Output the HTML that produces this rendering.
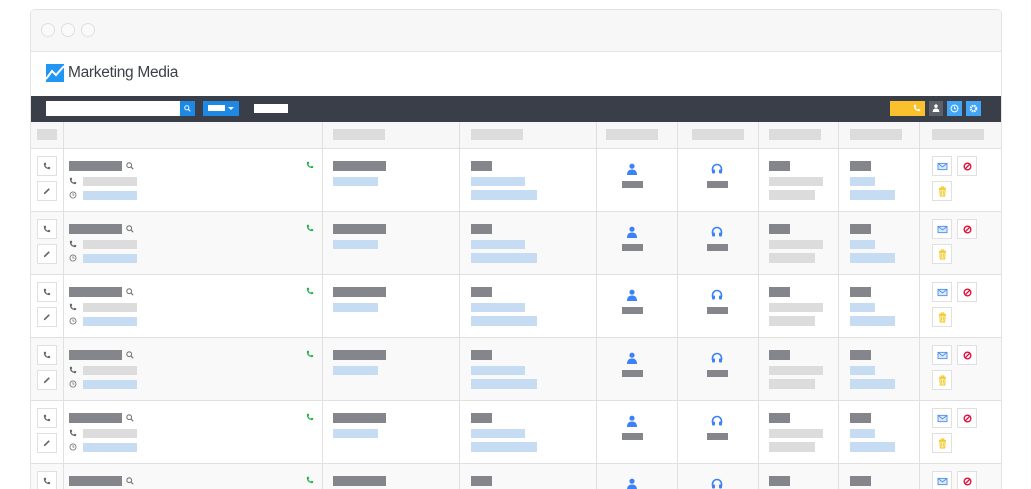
<!DOCTYPE html><html><head><style>
*{margin:0;padding:0;box-sizing:border-box}
body{width:1031px;height:489px;background:#fff;position:relative;overflow:hidden;font-family:"Liberation Sans",sans-serif}
.a{position:absolute}
.win{left:30px;top:9px;width:972px;height:480px;border:1px solid #e3e3e3;border-bottom:none;border-radius:5px 5px 0 0;overflow:hidden;background:#fff}
.tb{left:0;top:0;width:100%;height:42px;background:#f7f7f7;border-bottom:1px solid #e3e3e3}
.dot{width:14px;height:14px;border-radius:50%;border:1px solid #e0e0e0;background:#fafafa;top:13px}
.row{position:absolute;left:0;width:970px;height:63px;border-bottom:1px solid #e0e0e0}
.g{background:#f9f9f9}
.vl{position:absolute;top:0;bottom:0;width:1px;background:#e0e0e0}
.d{background:#85868b}.l{background:#dcdcdc}.b{background:#c5dcf3}
.btn{position:absolute;width:20px;height:20px;border:1px solid #e0e0e0;background:#fff;display:flex;align-items:center;justify-content:center}
svg{display:block}
</style></head><body>
<svg width="0" height="0" style="position:absolute">
<defs>
<symbol id="ph" viewBox="0 0 10 10"><path d="M2 1 L3.5 1 L4 3 L3 4 Q4 6.5 6 7 L7 6 L9 6.5 L9 8 Q8.5 9 7.5 9 Q1 8 1 2 Q1 1 2 1Z" fill="currentColor"/></symbol>
<symbol id="sr" viewBox="0 0 10 10"><circle cx="4" cy="4" r="3" fill="none" stroke="currentColor" stroke-width="1.3"/><path d="M6.2 6.2 L9 9" stroke="currentColor" stroke-width="1.5"/></symbol>
<symbol id="ck" viewBox="0 0 10 10"><circle cx="5" cy="5" r="3.8" fill="none" stroke="currentColor" stroke-width="1.1"/><path d="M5 2.8V5.2H6.8" fill="none" stroke="currentColor" stroke-width="1"/></symbol>
<symbol id="pn" viewBox="0 0 10 10"><path d="M1 9 L1.5 7 L7 1.5 L8.5 3 L3 8.5Z" fill="currentColor"/></symbol>
<symbol id="us" viewBox="0 0 12 12"><circle cx="6" cy="3.2" r="2.6" fill="currentColor"/><path d="M1 12 Q1 6.5 6 6.5 Q11 6.5 11 12Z" fill="currentColor"/></symbol>
<symbol id="hs" viewBox="0 0 12 12"><path d="M1.5 8 V6 A4.5 4.5 0 0 1 10.5 6 V8" fill="none" stroke="currentColor" stroke-width="1.6"/><rect x="1" y="6.5" width="3" height="4" rx="1" fill="currentColor"/><rect x="8" y="6.5" width="3" height="4" rx="1" fill="currentColor"/></symbol>
<symbol id="ml" viewBox="0 0 12 10"><rect x="1" y="1.5" width="10" height="7" fill="#dbe9fb" stroke="currentColor" stroke-width="1"/><path d="M1 1.5 L6 5.5 L11 1.5" fill="none" stroke="currentColor" stroke-width="1"/></symbol>
<symbol id="bl" viewBox="0 0 10 10"><circle cx="5" cy="5" r="3.7" fill="none" stroke="currentColor" stroke-width="1.5"/><path d="M2.5 7.5 L7.5 2.5" stroke="currentColor" stroke-width="1.5"/></symbol>
<symbol id="tr" viewBox="0 0 10 12"><path d="M1 2.5H9M3.5 2.5V1H6.5V2.5" fill="none" stroke="currentColor" stroke-width="1"/><path d="M2 3.5H8L7.5 11H2.5Z" fill="#fff3c4" stroke="currentColor" stroke-width="1"/><path d="M4 5V9.5M6 5V9.5" stroke="currentColor" stroke-width="0.8"/></symbol>
</defs></svg>
<div class="a win">
<div class="a tb"><div class="a dot" style="left:10px"></div><div class="a dot" style="left:30px"></div><div class="a dot" style="left:50px"></div></div>
<div class="a" style="left:15px;top:54px;width:18px;height:18px;background:#2196f3"><svg width="18" height="18" viewBox="0 0 18 18"><path d="M0 15 L6 7 L10 11 L18 2" fill="none" stroke="#fff" stroke-width="2"/></svg></div>
<div class="a" style="left:37px;top:54px;font-size:15.5px;color:#3b3f47;letter-spacing:-0.3px">Marketing Media</div>
<div class="a" style="left:0;top:86px;width:970px;height:26px;background:#393e48">
<div class="a" style="left:15px;top:5px;width:134px;height:15px;background:#fff"></div>
<div class="a" style="left:149px;top:5px;width:15px;height:15px;background:#1e88e5;color:#fff;padding:4px"><svg width="7" height="7"><use href="#sr"/></svg></div>
<div class="a" style="left:172px;top:5px;width:36px;height:15px;background:#1e88e5"><div class="a" style="left:5px;top:4px;width:17px;height:6px;background:#fff"></div><div class="a" style="left:25px;top:6px;border:3px solid transparent;border-top-color:#fff"></div></div>
<div class="a" style="left:223px;top:8px;width:34px;height:9px;background:#fff"></div>
<div class="a" style="left:859px;top:5px;width:35px;height:15px;background:#fbc02d;color:#fff;padding:3px 0 0 23px"><svg width="8" height="8"><use href="#ph"/></svg></div>
<div class="a" style="left:898px;top:5px;width:14px;height:15px;background:#5b6069;color:#fff;padding:3px"><svg width="8" height="8"><use href="#us"/></svg></div>
<div class="a" style="left:916px;top:5px;width:15px;height:15px;background:#42a5f5;color:#fff;padding:3px"><svg width="9" height="9"><use href="#ck"/></svg></div>
<div class="a" style="left:935px;top:5px;width:15px;height:15px;background:#42a5f5;color:#fff;padding:3px"><svg width="9" height="9" viewBox="0 0 10 10"><circle cx="5" cy="5" r="3" fill="none" stroke="#fff" stroke-width="2.4" stroke-dasharray="1.6 0.8"/></svg></div>
</div>
<div class="row" style="top:112px;height:27px;background:#f7f7f7">
<div class="a l" style="left:6px;top:7px;width:20px;height:11px"></div>
<div class="a l" style="left:302px;top:7px;width:52px;height:11px"></div>
<div class="a l" style="left:440px;top:7px;width:52px;height:11px"></div>
<div class="a l" style="left:575px;top:7px;width:52px;height:11px"></div>
<div class="a l" style="left:661px;top:7px;width:52px;height:11px"></div>
<div class="a l" style="left:738px;top:7px;width:52px;height:11px"></div>
<div class="a l" style="left:819px;top:7px;width:52px;height:11px"></div>
<div class="a l" style="left:901px;top:7px;width:52px;height:11px"></div>
<div class="vl" style="left:32px"></div><div class="vl" style="left:291px"></div><div class="vl" style="left:428px"></div><div class="vl" style="left:565px"></div><div class="vl" style="left:646px"></div><div class="vl" style="left:727px"></div><div class="vl" style="left:807px"></div><div class="vl" style="left:888px"></div>
</div>
<div id="rows"></div>
</div>
<script>
var h='';
for(var i=0;i<6;i++){var t=139+i*63;
h+='<div class="row'+(i%2?' g':'')+'" style="top:'+t+'px">'+
'<div class="vl" style="left:32px"></div><div class="vl" style="left:291px"></div><div class="vl" style="left:428px"></div><div class="vl" style="left:565px"></div><div class="vl" style="left:646px"></div><div class="vl" style="left:727px"></div><div class="vl" style="left:807px"></div><div class="vl" style="left:888px"></div>'+
'<div class="btn" style="left:6px;top:7px;color:#666"><svg width="8" height="8"><use href="#ph"/></svg></div>'+
'<div class="btn" style="left:6px;top:32px;color:#666"><svg width="8" height="8"><use href="#pn"/></svg></div>'+
'<div class="a d" style="left:38px;top:12px;width:53px;height:10px"></div>'+
'<svg class="a" style="left:95px;top:13px;color:#777" width="8" height="8"><use href="#sr"/></svg>'+
'<svg class="a" style="left:275px;top:12px;color:#22b14c" width="8" height="8"><use href="#ph"/></svg>'+
'<svg class="a" style="left:38px;top:28px;color:#666" width="8" height="8"><use href="#ph"/></svg>'+
'<div class="a l" style="left:52px;top:28px;width:54px;height:9px"></div>'+
'<svg class="a" style="left:38px;top:42px;color:#777" width="8" height="8"><use href="#ck"/></svg>'+
'<div class="a b" style="left:52px;top:42px;width:54px;height:9px"></div>'+
'<div class="a d" style="left:302px;top:12px;width:53px;height:10px"></div>'+
'<div class="a b" style="left:302px;top:28px;width:45px;height:9px"></div>'+
'<div class="a d" style="left:440px;top:12px;width:21px;height:10px"></div>'+
'<div class="a b" style="left:440px;top:28px;width:54px;height:9px"></div>'+
'<div class="a b" style="left:440px;top:41px;width:66px;height:10px"></div>'+
'<svg class="a" style="left:595px;top:14px;color:#3b82f6" width="12" height="12"><use href="#us"/></svg>'+
'<div class="a d" style="left:591px;top:32px;width:21px;height:7px"></div>'+
'<svg class="a" style="left:680px;top:14px;color:#3b82f6" width="12" height="12"><use href="#hs"/></svg>'+
'<div class="a d" style="left:676px;top:32px;width:21px;height:7px"></div>'+
'<div class="a d" style="left:738px;top:12px;width:21px;height:10px"></div>'+
'<div class="a l" style="left:738px;top:28px;width:54px;height:9px"></div>'+
'<div class="a l" style="left:738px;top:41px;width:46px;height:10px"></div>'+
'<div class="a d" style="left:819px;top:12px;width:21px;height:10px"></div>'+
'<div class="a b" style="left:819px;top:28px;width:25px;height:9px"></div>'+
'<div class="a b" style="left:819px;top:41px;width:45px;height:10px"></div>'+
'<div class="btn" style="left:901px;top:7px;color:#4f8fe8"><svg width="11" height="9"><use href="#ml"/></svg></div>'+
'<div class="btn" style="left:926px;top:7px;color:#e0103a"><svg width="9" height="9"><use href="#bl"/></svg></div>'+
'<div class="btn" style="left:901px;top:32px;color:#f0c419"><svg width="9" height="11"><use href="#tr"/></svg></div>'+
'</div>';}
document.getElementById('rows').innerHTML=h;
</script>
</body></html>
